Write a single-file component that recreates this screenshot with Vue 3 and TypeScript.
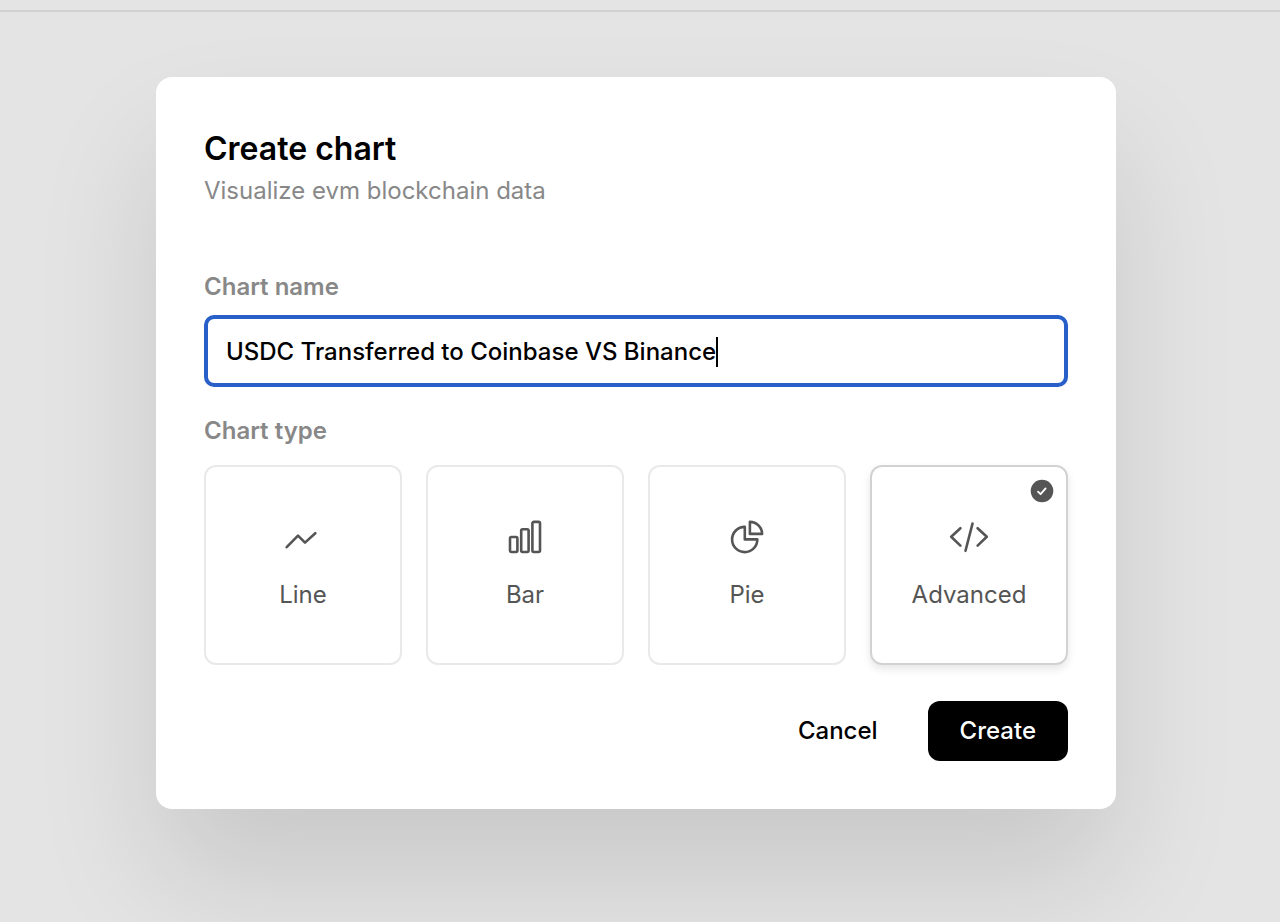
<script setup lang="ts">
import { ref } from 'vue'

type ChartType = 'line' | 'bar' | 'pie' | 'advanced'

const name = ref('USDC Transferred to Coinbase VS Binance')
const selected = ref<ChartType>('advanced')
const types: { id: ChartType; label: string }[] = [
  { id: 'line', label: 'Line' },
  { id: 'bar', label: 'Bar' },
  { id: 'pie', label: 'Pie' },
  { id: 'advanced', label: 'Advanced' },
]
</script>

<template>
  <div class="page">
    <header class="topbar"></header>
    <main class="stage">
      <form class="modal" @submit.prevent>
        <h1 class="title">Create chart</h1>
        <p class="subtitle">Visualize evm blockchain data</p>

        <label class="label name-label" for="chart-name">Chart name</label>
        <div class="field">
          <input id="chart-name" v-model="name" class="input" type="text" autocomplete="off" spellcheck="false" />
          <span class="caret" aria-hidden="true"></span>
        </div>

        <fieldset class="types">
          <legend class="label type-label">Chart type</legend>
          <div class="grid">
            <label v-for="t in types" :key="t.id" class="card" :class="{ active: selected === t.id }">
              <input v-model="selected" class="radio" type="radio" name="chart-type" :value="t.id" />
              <svg class="icon" viewBox="0 0 40 40" aria-hidden="true">
                <path v-if="t.id === 'line'" d="M3.7 30.2 15 18.6 22 25.6 32.3 16.2" />
                <g v-else-if="t.id === 'bar'">
                  <rect x="5" y="20" width="7.4" height="15" rx="1.4" />
                  <rect x="16.2" y="12.2" width="7.4" height="22.8" rx="1.4" />
                  <rect x="27.4" y="4.9" width="7.6" height="30.1" rx="1.4" />
                </g>
                <g v-else-if="t.id === 'pie'">
                  <path d="M17.8 9.9A12.6 12.6 0 1 0 30.3 22.4H17.8Z" />
                  <path d="M22.9 4.9A12.2 12.2 0 0 1 35.1 16.9H22.9Z" />
                </g>
                <path v-else d="M11.4 11.2 2.2 19.8 11.4 28.6M28.6 11.2 37.8 19.8 28.6 28.6M23.5 6.6 16.5 33.8" />
              </svg>
              <span class="card-text">{{ t.label }}</span>
              <svg v-if="selected === t.id" class="check" viewBox="0 0 24 24" aria-hidden="true">
                <circle cx="12" cy="12" r="11.3" fill="#555" />
                <path d="M8 12.6 10.6 15.2 15.6 9.4" fill="none" stroke="#fff" stroke-width="1.8" stroke-linecap="round" stroke-linejoin="round" />
              </svg>
            </label>
          </div>
        </fieldset>

        <div class="actions">
          <button class="btn" type="button">Cancel</button>
          <button class="btn primary" type="submit">Create</button>
        </div>
      </form>
    </main>
  </div>
</template>

<style>
body {
  margin: 0;
  background: #e4e4e4;
}
</style>

<style scoped>
.page {
  min-height: 100vh;
  overflow: hidden;
  box-sizing: border-box;
  background: #e4e4e4;
  font-family: Inter, "Liberation Sans", sans-serif;
  font-size: 24px;
  line-height: 36px;
}
.topbar {
  height: 10px;
  border-bottom: 2px solid #d2d2d2;
}
.stage {
  display: flex;
  justify-content: center;
  padding: 65px 24px 64px 16px;
}
.modal {
  box-sizing: border-box;
  width: 100%;
  max-width: 960px;
  padding: 48px;
  border-radius: 16px;
  background: #fff;
  box-shadow: 0 70px 124px rgba(0, 0, 0, 0.12);
}
.title {
  margin: 0;
  font-size: 32px;
  line-height: 48px;
  font-weight: 600;
  color: #000;
}
.subtitle {
  margin: 0;
  color: #888;
}
.label {
  display: block;
  padding: 0;
  font-weight: 600;
  color: #888;
}
.name-label {
  margin: 60px 0 10px;
}
.field {
  display: flex;
  align-items: center;
  box-sizing: border-box;
  height: 72px;
  padding: 2px 18px 0;
  border: 4px solid #285fc8;
  border-radius: 10px;
}
.input {
  field-sizing: content;
  min-width: 1px;
  max-width: 100%;
  height: 36px;
  padding: 0;
  border: 0;
  outline: 0;
  background: transparent;
  font: inherit;
  font-weight: 500;
  color: #000;
  caret-color: transparent;
}
.caret {
  flex: none;
  width: 2px;
  height: 30px;
  background: #000;
}
.types {
  min-width: 0;
  margin: 26px 0 0;
  padding: 0;
  border: 0;
}
.type-label {
  margin-bottom: 16px;
}
.grid {
  display: grid;
  grid-template-columns: repeat(4, 1fr);
  gap: 24px;
}
.card {
  position: relative;
  display: flex;
  flex-direction: column;
  align-items: center;
  box-sizing: border-box;
  height: 200px;
  padding-top: 50px;
  border: 2px solid #e9e9e9;
  border-radius: 12px;
  color: #555;
  cursor: pointer;
}
.card.active {
  border-color: #d2d2d2;
  box-shadow: 0 4px 8px rgba(0, 0, 0, 0.1);
}
.radio {
  position: absolute;
  inset: 0;
  margin: 0;
  opacity: 0;
}
.icon {
  width: 40px;
  height: 40px;
  margin-bottom: 20px;
  fill: none;
  stroke: #555;
  stroke-width: 2.6;
  stroke-linecap: round;
  stroke-linejoin: round;
}
.check {
  position: absolute;
  top: 12px;
  right: 12px;
  width: 24px;
  height: 24px;
}
.actions {
  display: flex;
  justify-content: flex-end;
  gap: 18px;
  margin-top: 36px;
}
.btn {
  height: 60px;
  padding: 0 32px;
  border: 0;
  border-radius: 12px;
  background: transparent;
  font: inherit;
  font-weight: 500;
  color: #000;
  cursor: pointer;
}
.primary {
  background: #000;
  color: #fff;
}
</style>
